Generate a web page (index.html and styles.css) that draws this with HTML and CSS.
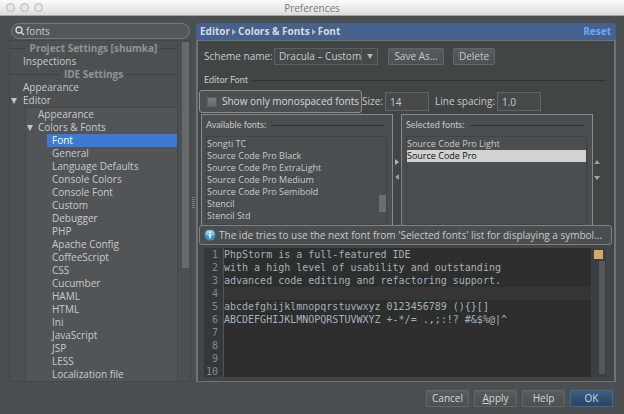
FILE: index.html
```html
<!DOCTYPE html>
<html lang="en">
<head>
<meta charset="utf-8">
<title>Preferences</title>
<link rel="stylesheet" href="styles.css">
</head>
<body>
<header class="titlebar">
  <div class="lights"><span class="light"></span><span class="light"></span><span class="light"></span></div>
  <h1 class="window-title">Preferences</h1>
</header>
<main class="workspace">
  <aside class="sidebar">
    <label class="search">
      <svg class="search-icon" viewBox="0 0 10 10" aria-hidden="true"><circle cx="4" cy="4" r="3"/><path d="M6.2 6.2 9 9"/></svg>
      <input class="search-input" type="text" value="fonts" aria-label="Search settings">
    </label>
    <div class="tree-pane">
      <div class="tree">
        <h2 class="tree-heading">Project Settings [shumka]</h2>
        <ul class="level-1"><li class="row">Inspections</li></ul>
        <h2 class="tree-heading">IDE Settings</h2>
        <ul class="level-1">
          <li class="row">Appearance</li>
          <li class="row open">Editor</li>
        </ul>
        <ul class="level-2">
          <li class="row">Appearance</li>
          <li class="row open">Colors &amp; Fonts</li>
          <li>
            <ul class="level-3">
              <li class="row selected">Font</li>
              <li class="row">General</li>
              <li class="row">Language Defaults</li>
              <li class="row">Console Colors</li>
              <li class="row">Console Font</li>
              <li class="row">Custom</li>
              <li class="row">Debugger</li>
              <li class="row">PHP</li>
              <li class="row">Apache Config</li>
              <li class="row">CoffeeScript</li>
              <li class="row">CSS</li>
              <li class="row">Cucumber</li>
              <li class="row">HAML</li>
              <li class="row">HTML</li>
              <li class="row">Ini</li>
              <li class="row">JavaScript</li>
              <li class="row">JSP</li>
              <li class="row">LESS</li>
              <li class="row">Localization file</li>
            </ul>
          </li>
        </ul>
      </div>
      <div class="tree-scroll"><div class="tree-thumb"></div></div>
    </div>
  </aside>
  <div class="splitter"><span class="grip"></span></div>
  <section class="detail">
    <div class="crumbs">
      <span>Editor</span><i class="tri-right"></i><span>Colors &amp; Fonts</span><i class="tri-right"></i><span>Font</span>
      <a class="reset" href="#">Reset</a>
    </div>
    <div class="panel">
      <div class="scheme-row">
        <label for="scheme">Scheme name:</label>
        <span class="combo">
          <select id="scheme"><option>Dracula – Custom</option></select>
          <span class="combo-arrow"><i class="tri-down"></i></span>
        </span>
        <button class="btn save">Save As...</button>
        <button class="btn delete">Delete</button>
      </div>
      <div class="group-title editor-title"><span>Editor Font</span></div>
      <div class="size-row">
        <label class="mono-box"><input class="check" type="checkbox">Show only monospaced fonts</label>
        <label class="size-label" for="size">Size:</label>
        <input class="field" id="size" type="text" value="14">
        <label class="spacing-label" for="spacing">Line spacing:</label>
        <input class="field" id="spacing" type="text" value="1.0">
      </div>
      <div class="lists">
        <div class="list-box">
          <div class="group-title"><span>Available fonts:</span></div>
          <ul class="font-list">
            <li>Songti TC</li>
            <li>Source Code Pro Black</li>
            <li>Source Code Pro ExtraLight</li>
            <li>Source Code Pro Medium</li>
            <li>Source Code Pro Semibold</li>
            <li>Stencil</li>
            <li>Stencil Std</li>
          </ul>
          <span class="list-thumb"></span>
        </div>
        <div class="arrows"><i class="tri-right"></i><i class="tri-left"></i></div>
        <div class="list-box">
          <div class="group-title"><span>Selected fonts:</span></div>
          <ul class="font-list">
            <li>Source Code Pro Light</li>
            <li class="picked">Source Code Pro</li>
          </ul>
        </div>
        <div class="arrows order"><i class="tri-up"></i><i class="tri-down"></i></div>
      </div>
      <div class="info">
        <svg class="info-icon" viewBox="0 0 12 12" aria-hidden="true"><circle cx="6" cy="6" r="5.5" fill="#3f93c8"/><ellipse cx="6" cy="4" rx="4.4" ry="3" fill="#8cc6e6"/><circle cx="6" cy="3.2" r="0.9" fill="#fff"/><path d="M6 5v4.2" fill="none" stroke="#fff" stroke-width="1.5"/></svg>
        <span>The ide tries to use the next font from 'Selected fonts' list for displaying a symbol...</span>
      </div>
      <div class="editor">
        <ol class="code">
          <li>PhpStorm is a full-featured IDE</li>
          <li>with a high level of usability and outstanding</li>
          <li>advanced code editing and refactoring support.</li>
          <li class="caret-line"></li>
          <li>abcdefghijklmnopqrstuvwxyz 0123456789 (){}[]</li>
          <li>ABCDEFGHIJKLMNOPQRSTUVWXYZ +-*/= .,;:!? #&amp;$%@|^</li>
          <li></li>
          <li></li>
          <li></li>
          <li></li>
        </ol>
        <div class="stripe"><span class="status"></span><span class="stripe-thumb"></span></div>
      </div>
    </div>
  </section>
</main>
<footer class="actions">
  <button class="btn">Cancel</button>
  <button class="btn"><u>A</u>pply</button>
  <button class="btn">Help</button>
  <button class="btn primary">OK</button>
</footer>
</body>
</html>
```
FILE: styles.css
```css
* { box-sizing: border-box; }
body {
  margin: 0;
  min-height: 100vh;
  background: #4b4f52;
  color: #c8c9ca;
  font: 10px/13px "Open Sans", "Noto Sans", sans-serif;
}
ul, ol { margin: 0; padding: 0; list-style: none; }
input, select, button { font: inherit; color: inherit; margin: 0; }

.titlebar {
  position: relative;
  height: 16px;
  background: linear-gradient(#fbfbfb, #dcdcdc);
  border-bottom: 1px solid #a5a5a5;
}
.lights { position: absolute; left: 6px; top: 3px; display: flex; gap: 5px; }
.light {
  width: 9px;
  height: 9px;
  border: 1px solid #b5b5b5;
  border-radius: 50%;
  background: #e6e6e6;
}
.window-title { margin: 0; font-size: 10px; line-height: 16px; font-weight: 400; text-align: center; color: #7b7b7b; }

.workspace { display: flex; padding: 7px 8px 0 9px; }
.sidebar { width: 182px; display: flex; flex-direction: column; }
.search {
  display: flex;
  align-items: center;
  gap: 1px;
  height: 16px;
  margin: 0 1px 1px 2px;
  padding: 0 3px;
  border: 1px solid #74787a;
  border-radius: 8px;
  background: #53575a;
}
.search-icon { width: 10px; height: 10px; fill: none; stroke: #d2d3d4; stroke-width: 1.4; }
.search-input { flex: 1; min-width: 0; padding: 0; border: 0; background: none; outline: 0; }

.tree-pane { flex: 1; display: flex; border: 1px solid #434749; background: #4c5053; }
.tree { flex: 1; display: flex; flex-direction: column; padding-top: 1px; }
.tree-heading {
  display: flex;
  align-items: center;
  gap: 4px;
  margin: 0;
  font-size: 10px;
  line-height: 13px;
  font-weight: 700;
  color: #919496;
  white-space: nowrap;
}
.tree-heading::before, .tree-heading::after { content: ""; flex: 1; height: 1px; background: #3e4143; }
.row { position: relative; height: 13px; white-space: nowrap; }
.level-1 .row { padding-left: 13px; }
.level-2 { flex: 1; margin-left: 15px; border: 1px solid #454849; border-width: 1px 0 0 1px; background: #525558; }
.level-2 .row { padding-left: 12px; }
.level-3 { margin-left: 21px; }
.level-2 .level-3 .row { padding-left: 5px; }
.selected { background: #3b7bd5; color: #fff; }
.open::before {
  content: "";
  position: absolute;
  left: 1px;
  top: 4px;
  border: 3px solid transparent;
  border-top: 6px solid #c3c5c6;
  border-bottom: 0;
}
.tree-scroll { width: 13px; padding: 1px 0 0 4px; border-left: 1px solid #454849; }
.tree-thumb { width: 7px; height: 226px; background: #66696a; }

.splitter { width: 5px; display: flex; align-items: center; justify-content: center; }
.grip { width: 3px; height: 11px; background: repeating-linear-gradient(#777b7d 0 1px, transparent 1px 2px); }

.detail { flex: 1; min-width: 0; }
.crumbs {
  display: flex;
  align-items: center;
  gap: 2px;
  height: 17px;
  padding: 0 5px 0 4px;
  border-radius: 4px 4px 0 0;
  background: #46628c;
  color: #d3dae4;
  font-weight: 700;
}
.reset { margin-left: auto; color: #68aaf2; text-decoration: none; }
.tri-right, .tri-left, .tri-up, .tri-down { width: 0; height: 0; border: 3px solid transparent; }
.tri-right { border-left: 4px solid #b2b6b9; border-right: 0; }
.tri-left { border-right: 4px solid #999d9f; border-left: 0; }
.tri-up { border-bottom: 4px solid #999d9f; border-top: 0; }
.tri-down { border-top: 4px solid #a4a7a9; border-bottom: 0; }

.panel { padding: 7px 2px 4px 1px; border: 1px solid #6f7374; border-width: 1px 2px; background: #414546; }
.scheme-row { display: flex; align-items: center; height: 17px; padding-left: 5px; }
.scheme-row > label { width: 70px; }
.combo { position: relative; width: 104px; height: 17px; }
.combo select {
  appearance: none;
  width: 100%;
  height: 17px;
  padding: 0 0 0 4px;
  border: 1px solid #5c6061;
  background: #45494a;
}
.combo-arrow {
  position: absolute;
  inset: 1px 1px 1px auto;
  width: 16px;
  display: flex;
  align-items: center;
  justify-content: center;
  border-left: 1px solid #5c6061;
  pointer-events: none;
}
.combo-arrow .tri-down { border-top-width: 5px; border-top-color: #b3b5b6; }
.btn {
  height: 17px;
  padding: 0;
  border: 1px solid #626667;
  border-radius: 1px;
  background: linear-gradient(#575c5e, #4b5052);
  line-height: 13px;
}
.save { width: 56px; margin-left: 10px; }
.delete { width: 42px; margin-left: 9px; }

.group-title { display: flex; align-items: center; gap: 5px; font: 9px/12px Lato, "Open Sans", sans-serif; }
.group-title::after { content: ""; flex: 1; height: 1px; background: #303334; }
.editor-title { margin: 9px 6px 4px 5px; }

.size-row { display: flex; align-items: center; height: 23px; white-space: nowrap; }
.mono-box {
  display: flex;
  align-items: center;
  gap: 5px;
  width: 163px;
  height: 23px;
  padding-left: 7px;
  border: 1px solid #8b8f90;
  border-radius: 3px;
  background: #4c5053;
  color: #d5d6d7;
}
.check {
  appearance: none;
  width: 10px;
  height: 10px;
  border: 1px solid #5a5e5f;
  background: linear-gradient(#7b7e80, #65696b);
}
.field { width: 44px; height: 19px; padding: 0 4px; border: 1px solid #606465; background: #45494a; }
.size-label { width: 23px; }
.spacing-label { width: 68px; padding-left: 6px; }

.lists { display: flex; padding: 1px 0 0 2px; }
.list-box {
  position: relative;
  flex: 1;
  height: 111px;
  padding: 4px 5px 0 4px;
  border: 1px solid #85898a;
  border-bottom: 0;
  background: #4a4e50;
}
.list-box .group-title { margin: 0 3px 5px 0; }
.font-list { height: 89px; padding-top: 1px; border: 1px solid #414446; font-size: 9px; }
.font-list li { height: 12px; line-height: 12px; }
.picked { background: #d2d2d2; color: #111; }
.list-thumb { position: absolute; right: 6px; bottom: 13px; width: 7px; height: 17px; background: #6b6e6f; }
.arrows { width: 8px; display: flex; flex-direction: column; align-items: center; justify-content: center; gap: 9px; }
.order { width: 19px; align-items: flex-start; padding-left: 1px; gap: 12px; }

.info {
  display: flex;
  align-items: center;
  gap: 3px;
  height: 20px;
  padding-left: 4px;
  border: 1px solid #7e8283;
  border-radius: 3px;
  background: #4a4e50;
  white-space: nowrap;
  overflow: hidden;
}
.info-icon { width: 12px; height: 12px; flex: none; }

.editor { display: flex; height: 129px; margin: 3px 6px 0 5px; background: #2d2e2e; overflow: hidden; }
.code {
  flex: 1;
  min-width: 0;
  counter-reset: line;
  background: linear-gradient(90deg, #35383a 19px, #555 19px 20px, transparent 20px);
  color: #a5b1bc;
  font-family: "DejaVu Sans Mono", monospace;
}
.code li { display: flex; height: 13px; white-space: pre; counter-increment: line; }
.code li::before { content: counter(line); width: 14px; margin-right: 6px; flex: none; text-align: right; color: #85898b; }
.caret-line { background: linear-gradient(90deg, transparent 20px, #353535 20px); }
.stripe { width: 15px; display: flex; flex-direction: column; align-items: center; gap: 2px; padding: 2px 0 3px; background: #3c3f41; }
.status { width: 9px; height: 9px; background: #d7a965; }
.stripe-thumb { flex: 1; width: 6px; margin-left: 6px; background: #555758; }

.actions { display: flex; justify-content: flex-end; gap: 5px; padding: 8px 11px 7px; }
.actions .btn { width: 43px; color: #d5d6d7; }
.actions .primary { background: linear-gradient(#3b5d85, #294466); border-color: #4b6688; }
```
